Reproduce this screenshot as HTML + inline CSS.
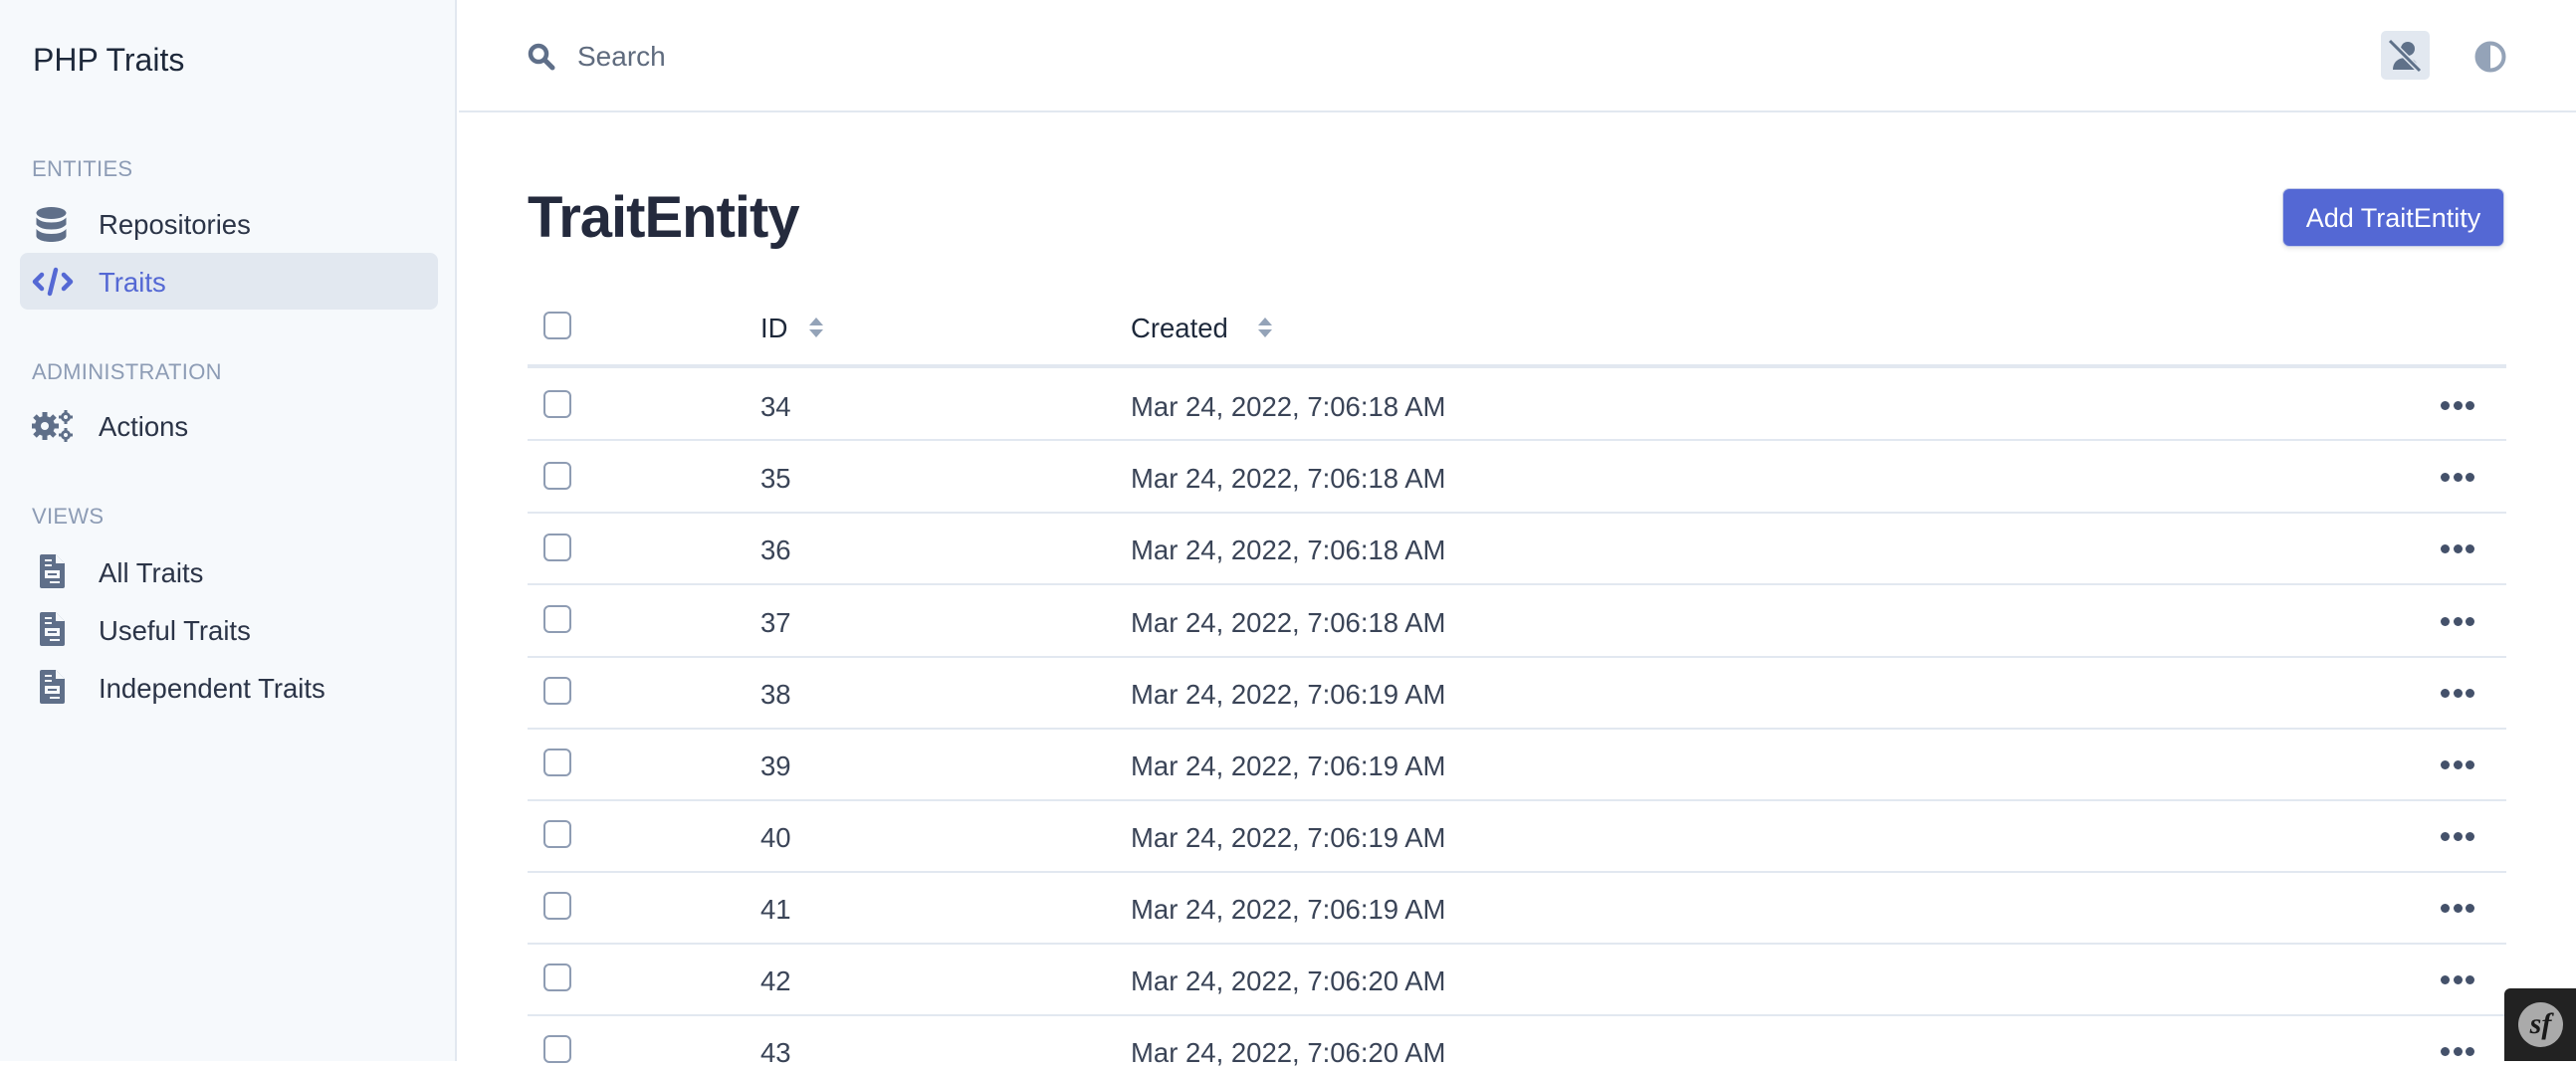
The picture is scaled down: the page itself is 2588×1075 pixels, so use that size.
<!DOCTYPE html>
<html><head><meta charset="utf-8"><style>
*{margin:0;padding:0;box-sizing:border-box}
body{width:2588px;height:1066px;overflow:hidden;background:#fff;font-family:"Liberation Sans",sans-serif;color:#334155;position:relative}
.sb{position:absolute;left:0;top:0;width:459px;height:1066px;background:#f6f9fc;border-right:2px solid #e2e8f0}
.a{position:absolute;white-space:nowrap}
.brand{left:33px;top:42px;font-size:32px;color:#1e293b}
.sec{left:32px;font-size:22px;color:#8d9cb5;letter-spacing:.3px}
.item{left:99px;font-size:27.5px;color:#2b3447;line-height:34px}
.ic{position:absolute;left:36px}
.hl{position:absolute;left:20px;top:254px;width:420px;height:57px;background:#e2e8f0;border-radius:8px}
.hdr{position:absolute;left:461px;top:0;right:0;height:113px;border-bottom:2px solid #e2e8f0}
.cb{position:absolute;left:546px;width:28px;height:28px;border:2px solid #8e9cb3;border-radius:6px;background:#fff}
.rl{position:absolute;left:530px;width:1988px;height:2px;background:#e2e8f0}
.cell{position:absolute;font-size:27.5px;color:#3a4457;line-height:34px;white-space:nowrap}
.dots{position:absolute;left:2452px}
.dots i{display:inline-block;width:9px;height:9px;border-radius:50%;background:#44516a;margin-right:3.5px}
</style></head><body>
<div class="sb"></div>
<div class="a brand">PHP Traits</div>
<div class="a sec" style="top:157px">ENTITIES</div>
<svg class="ic" style="top:208px" width="31" height="36" viewBox="0 0 31 36"><g fill="#5f6f89"><ellipse cx="15.5" cy="6" rx="15" ry="6"/><path d="M0.5 10.5c3 3.5 8 5 15 5s12-1.5 15-5v7c-3 3.5-8 5-15 5s-12-1.5-15-5z"/><path d="M0.5 22c3 3.5 8 5 15 5s12-1.5 15-5v7c0 3.5-7 6-15 6s-15-2.5-15-6z"/></g></svg>
<div class="a item" style="top:209px">Repositories</div>
<div class="hl"></div>
<svg class="ic" style="top:268px;left:32px" width="42" height="30" viewBox="0 0 42 30"><g fill="none" stroke="#5468d4" stroke-width="4.5" stroke-linecap="round" stroke-linejoin="round"><path d="M10 8l-7 7 7 7M32 8l7 7-7 7"/><path d="M24 3l-6 24"/></g></svg>
<div class="a item" style="top:267px;color:#5468d4">Traits</div>
<div class="a sec" style="top:361px">ADMINISTRATION</div>
<svg class="ic" style="top:411px;left:32px" width="42" height="34" viewBox="0 0 42 34"><g fill="#5f6f89"><circle cx="13" cy="17" r="10"/><g stroke="#5f6f89" stroke-width="5"><path d="M13 3v28M-1 17h28M3 7l20 20M23 7L3 27"/></g><circle cx="13" cy="17" r="4" fill="#f6f9fc"/><circle cx="34" cy="8" r="5"/><circle cx="34" cy="26" r="5"/><g stroke="#5f6f89" stroke-width="3"><path d="M34 1v14M27 8h14M34 19v14M27 26h14"/></g><circle cx="34" cy="8" r="2" fill="#f6f9fc"/><circle cx="34" cy="26" r="2" fill="#f6f9fc"/></g></svg>
<div class="a item" style="top:412px">Actions</div>
<div class="a sec" style="top:506px">VIEWS</div>
<svg class="ic" style="top:557px;left:40px" width="25" height="34" viewBox="0 0 25 34"><path fill="#5f6f89" d="M2 0h14l9 9v23a2 2 0 0 1-2 2H2a2 2 0 0 1-2-2V2a2 2 0 0 1 2-2z"/><path fill="#f6f9fc" d="M16 0v9h9zM5 5h7v2H5zM5 10h7v2H5zM5 16h15v8H5zM10 27h10v2H10z"/><path fill="#5f6f89" d="M8 19h9v2H8z"/></svg>
<div class="a item" style="top:559px">All Traits</div>
<svg class="ic" style="top:615px;left:40px" width="25" height="34" viewBox="0 0 25 34"><path fill="#5f6f89" d="M2 0h14l9 9v23a2 2 0 0 1-2 2H2a2 2 0 0 1-2-2V2a2 2 0 0 1 2-2z"/><path fill="#f6f9fc" d="M16 0v9h9zM5 5h7v2H5zM5 10h7v2H5zM5 16h15v8H5zM10 27h10v2H10z"/><path fill="#5f6f89" d="M8 19h9v2H8z"/></svg>
<div class="a item" style="top:617px">Useful Traits</div>
<svg class="ic" style="top:673px;left:40px" width="25" height="34" viewBox="0 0 25 34"><path fill="#5f6f89" d="M2 0h14l9 9v23a2 2 0 0 1-2 2H2a2 2 0 0 1-2-2V2a2 2 0 0 1 2-2z"/><path fill="#f6f9fc" d="M16 0v9h9zM5 5h7v2H5zM5 10h7v2H5zM5 16h15v8H5zM10 27h10v2H10z"/><path fill="#5f6f89" d="M8 19h9v2H8z"/></svg>
<div class="a item" style="top:675px">Independent Traits</div>

<div class="hdr"></div>
<svg style="position:absolute;left:530px;top:43px" width="30" height="28" viewBox="0 0 30 28"><circle cx="11" cy="11" r="8" fill="none" stroke="#5f6f89" stroke-width="4.5"/><path d="M17 17l8 8" stroke="#5f6f89" stroke-width="5" stroke-linecap="round"/></svg>
<div class="a" style="left:580px;top:41px;font-size:28px;color:#5f6b7e">Search</div>
<div style="position:absolute;left:2392px;top:31px;width:49px;height:49px;background:#e2e8f0;border-radius:5px"></div>
<svg style="position:absolute;left:2392px;top:31px" width="49" height="49" viewBox="0 0 49 49"><circle cx="27" cy="18" r="7" fill="#5f7189"/><path d="M12 39c0-8 6-12 13-12s12 4 13 12z" fill="#5f7189"/><path d="M9 10l30 30" stroke="#e2e8f0" stroke-width="6"/><path d="M9 10l30 30" stroke="#5f7189" stroke-width="3"/></svg>
<svg style="position:absolute;left:2486px;top:41px" width="32" height="32" viewBox="0 0 32 32"><circle cx="16" cy="16" r="13.5" fill="none" stroke="#94a3b8" stroke-width="4"/><path d="M16 2a14 14 0 0 0 0 28z" fill="#94a3b8"/></svg>

<div class="a" style="left:530px;top:185px;font-size:58px;font-weight:bold;color:#242a3d;letter-spacing:-1px">TraitEntity</div>
<div style="position:absolute;left:2293px;top:189px;width:223px;height:59px;background:#5468d4;border-radius:7px;border:1px solid #c5cde8;box-shadow:0 2px 4px rgba(0,0,0,.1);color:#fff;font-size:27px;line-height:59px;text-align:center">Add TraitEntity</div>

<div class="cb" style="top:313px"></div>
<div class="cell" style="left:764px;top:313px;color:#1e293b">ID</div>
<svg style="position:absolute;left:811px;top:317px" width="18" height="24" viewBox="0 0 18 24"><path d="M2 10l7-8 7 8z M2 14l7 8 7-8z" fill="#94a3b8"/></svg>
<div class="cell" style="left:1136px;top:313px;color:#1e293b">Created</div>
<svg style="position:absolute;left:1262px;top:317px" width="18" height="24" viewBox="0 0 18 24"><path d="M2 10l7-8 7 8z M2 14l7 8 7-8z" fill="#94a3b8"/></svg>
<div class="rl" style="top:366px;height:4px"></div>

<div class="cb" style="top:392px"></div><div class="cell" style="left:764px;top:392px">34</div><div class="cell" style="left:1136px;top:392px">Mar 24, 2022, 7:06:18 AM</div><div class="dots" style="top:399px"><i></i><i></i><i></i></div><div class="rl" style="top:441px"></div>
<div class="cb" style="top:464px"></div><div class="cell" style="left:764px;top:464px">35</div><div class="cell" style="left:1136px;top:464px">Mar 24, 2022, 7:06:18 AM</div><div class="dots" style="top:471px"><i></i><i></i><i></i></div><div class="rl" style="top:514px"></div>
<div class="cb" style="top:536px"></div><div class="cell" style="left:764px;top:536px">36</div><div class="cell" style="left:1136px;top:536px">Mar 24, 2022, 7:06:18 AM</div><div class="dots" style="top:543px"><i></i><i></i><i></i></div><div class="rl" style="top:586px"></div>
<div class="cb" style="top:608px"></div><div class="cell" style="left:764px;top:609px">37</div><div class="cell" style="left:1136px;top:609px">Mar 24, 2022, 7:06:18 AM</div><div class="dots" style="top:616px"><i></i><i></i><i></i></div><div class="rl" style="top:659px"></div>
<div class="cb" style="top:680px"></div><div class="cell" style="left:764px;top:681px">38</div><div class="cell" style="left:1136px;top:681px">Mar 24, 2022, 7:06:19 AM</div><div class="dots" style="top:688px"><i></i><i></i><i></i></div><div class="rl" style="top:731px"></div>
<div class="cb" style="top:752px"></div><div class="cell" style="left:764px;top:753px">39</div><div class="cell" style="left:1136px;top:753px">Mar 24, 2022, 7:06:19 AM</div><div class="dots" style="top:760px"><i></i><i></i><i></i></div><div class="rl" style="top:803px"></div>
<div class="cb" style="top:824px"></div><div class="cell" style="left:764px;top:825px">40</div><div class="cell" style="left:1136px;top:825px">Mar 24, 2022, 7:06:19 AM</div><div class="dots" style="top:832px"><i></i><i></i><i></i></div><div class="rl" style="top:875px"></div>
<div class="cb" style="top:896px"></div><div class="cell" style="left:764px;top:897px">41</div><div class="cell" style="left:1136px;top:897px">Mar 24, 2022, 7:06:19 AM</div><div class="dots" style="top:904px"><i></i><i></i><i></i></div><div class="rl" style="top:947px"></div>
<div class="cb" style="top:968px"></div><div class="cell" style="left:764px;top:969px">42</div><div class="cell" style="left:1136px;top:969px">Mar 24, 2022, 7:06:20 AM</div><div class="dots" style="top:976px"><i></i><i></i><i></i></div><div class="rl" style="top:1019px"></div>
<div class="cb" style="top:1040px"></div><div class="cell" style="left:764px;top:1041px">43</div><div class="cell" style="left:1136px;top:1041px">Mar 24, 2022, 7:06:20 AM</div><div class="dots" style="top:1048px"><i></i><i></i><i></i></div>

<div style="position:absolute;left:2516px;top:993px;width:72px;height:73px;background:#222;border-top-left-radius:6px"></div>
<div style="position:absolute;left:2530px;top:1007px;width:45px;height:45px;border-radius:50%;background:#aaa;color:#1a1a1a;font-family:'Liberation Serif',serif;font-style:italic;font-weight:bold;font-size:30px;line-height:43px;text-align:center">sf</div>
</body></html>
